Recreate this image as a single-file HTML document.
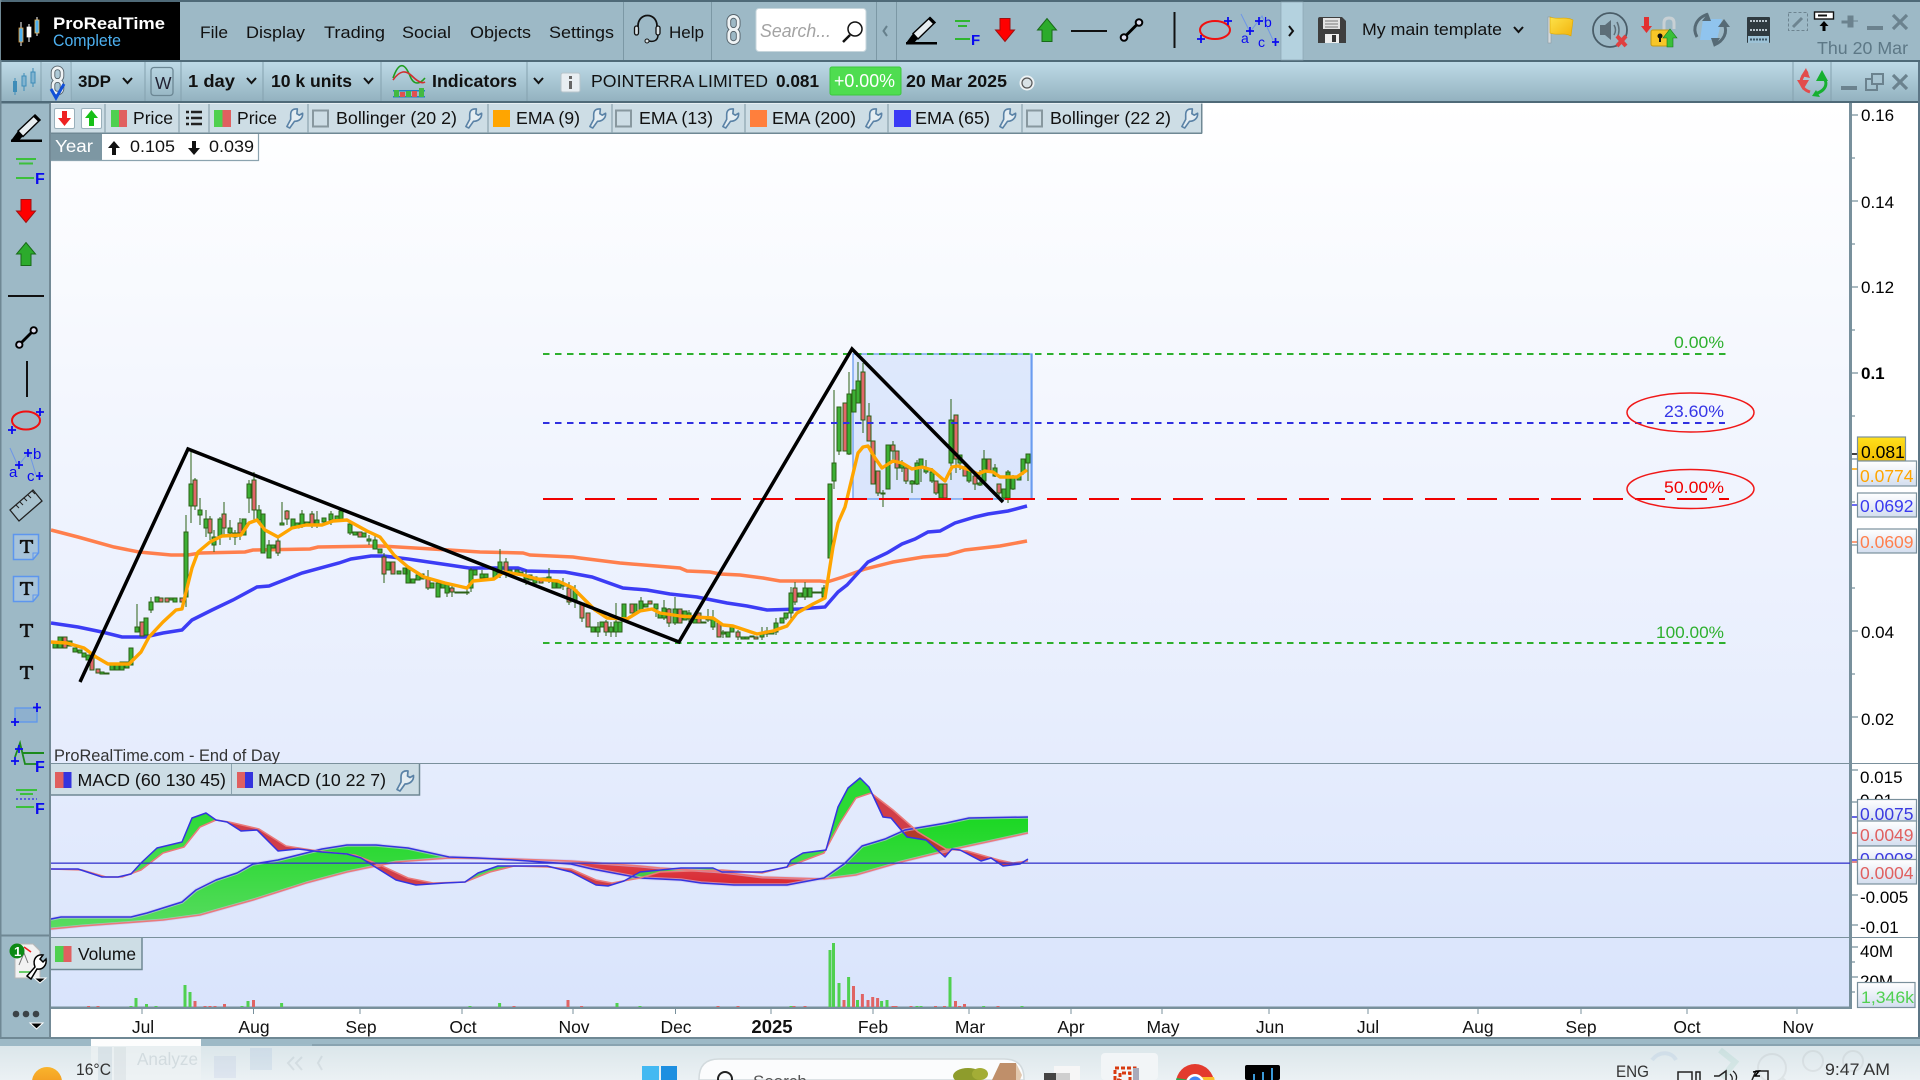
<!DOCTYPE html>
<html lang="en"><head><meta charset="utf-8"><title>ProRealTime Complete</title>
<style>
html,body{margin:0;padding:0;width:1920px;height:1080px;overflow:hidden;background:#9db9c6}
svg{display:block;font-family:"Liberation Sans",Arial,sans-serif;font-size:17px}
text{fill:#111}
.b{font-weight:bold}
.lab{font-size:17px;fill:#000}
</style></head><body>
<svg width="1920" height="1080" viewBox="0 0 1920 1080" xmlns="http://www.w3.org/2000/svg">
<defs>
<linearGradient id="bar2" x1="0" y1="0" x2="0" y2="1"><stop offset="0" stop-color="#bedae7"/><stop offset="1" stop-color="#93b2c0"/></linearGradient>
<linearGradient id="chart" gradientUnits="userSpaceOnUse" x1="0" y1="103" x2="0" y2="1007"><stop offset="0" stop-color="#ffffff"/><stop offset=".73" stop-color="#e5ecfd"/><stop offset="1" stop-color="#d9e4fc"/></linearGradient>
<linearGradient id="tag" x1="0" y1="0" x2="0" y2="1"><stop offset="0" stop-color="#ffffff"/><stop offset="1" stop-color="#d3deef"/></linearGradient>
<linearGradient id="tagy" x1="0" y1="0" x2="0" y2="1"><stop offset="0" stop-color="#ffe01c"/><stop offset="1" stop-color="#f2bd00"/></linearGradient>
<linearGradient id="task" x1="0" y1="0" x2="0" y2="1"><stop offset="0" stop-color="#dbe6ea"/><stop offset="1" stop-color="#ebf1f4"/></linearGradient>
<linearGradient id="sun" x1="0" y1="0" x2="0" y2="1"><stop offset="0" stop-color="#f9b42c"/><stop offset="1" stop-color="#ee8a1a"/></linearGradient>
<linearGradient id="flag" x1="0" y1="0" x2="1" y2="1"><stop offset="0" stop-color="#fde24a"/><stop offset="1" stop-color="#f2b30c"/></linearGradient>
<linearGradient id="grn" gradientUnits="userSpaceOnUse" x1="0" y1="810" x2="0" y2="930"><stop offset="0" stop-color="#17d81f"/><stop offset="1" stop-color="#5adb62"/></linearGradient>
<linearGradient id="red" gradientUnits="userSpaceOnUse" x1="0" y1="840" x2="0" y2="890"><stop offset="0" stop-color="#e05a5e"/><stop offset="1" stop-color="#d8232d"/></linearGradient>
<symbol id="pencil" viewBox="0 0 31 29" overflow="visible"><path d="M0 29V26.500H31V29Z" fill="#000"/><path d="M0 27.500L7 18L12 23L8 27.500Z" fill="#000"/><path d="M7 18L24 2L29 7L12 23.500Z" fill="#e8eef1" stroke="#000" stroke-width="1.400"/><path d="M22.500 4L24.500 1.500L30 7L27.500 9Z" fill="#000"/></symbol>
<symbol id="wr" viewBox="0 0 20 23" overflow="visible"><path d="M2 20.500L5 22L10 15C14.500 15 19 12 18.500 6.500L15 8.500L12.500 7L13 2C9 1.500 6 3 6 8V13Z" fill="#e4edf2" stroke="#5a82a6" stroke-width="1.700" stroke-linejoin="round"/></symbol>
<symbol id="down" viewBox="0 0 20 24" overflow="visible"><path d="M5 .5H15V12H19.500L10 23.500L.5 12H5Z" fill="#f00" stroke="#a01010"/></symbol>
<symbol id="up" viewBox="0 0 20 24" overflow="visible"><path d="M5 23.500H15V12H19.500L10 .5L.5 12H5Z" fill="#2cab2c" stroke="#186a18"/></symbol>
<symbol id="seg" viewBox="0 0 24 24" overflow="visible"><path d="M5 19L18 6" stroke="#000" stroke-width="3"/><circle cx="4.500" cy="19.500" r="3.300" fill="#dde" stroke="#000" stroke-width="2"/><circle cx="19.500" cy="4.500" r="3.300" fill="#dde" stroke="#000" stroke-width="2"/></symbol>
<symbol id="link" viewBox="0 0 16 30" overflow="visible"><rect x="3" y="1" width="10" height="14" rx="5" fill="none" stroke="#56636b" stroke-width="5"/><rect x="3" y="15" width="10" height="14" rx="5" fill="none" stroke="#56636b" stroke-width="5"/><rect x="3" y="1" width="10" height="14" rx="5" fill="none" stroke="#eef3f5" stroke-width="3"/><rect x="3" y="15" width="10" height="14" rx="5" fill="none" stroke="#eef3f5" stroke-width="3"/></symbol>
<symbol id="ttt" viewBox="0 0 18 18" overflow="visible"><path d="M1 1H17V6H15.500Q15 3 12 3H10.500V15L12.500 16V17H5.500V16L7.500 15V3H6Q3 3 2.500 6H1Z" fill="#111"/></symbol>
<clipPath id="aS1"><polygon points="51,600 51,869 82,870 106,877 122,877 141,870 163,853 184,847 200,827 216,820 229,822 259,829 286,846 318,851 355,855 380,865 408,878 433,883 465,882 490,872 514,866 547,867 571,869 596,880 612,883 640,878 660,872 722,870 762,873 787,867 824,853 840,823 856,798 871,793 893,810 918,832 946,849 967,851 999,860 1013,863 1028,861 1028,600"/></clipPath>
<clipPath id="aB1"><polygon points="51,600 51,869 78,869 102,877 118,877 131,874 141,863 157,848 182,842 192,818 206,813 216,820 227,822 241,831 257,830 278,851 298,849 322,852 347,854 361,858 380,870 396,880 416,885 445,883 465,882 478,873 498,866 547,866 571,872 596,885 608,886 624,881 640,872 681,868 713,868 722,872 762,872 787,867 791,860 803,853 826,850 838,807 848,788 860,778 869,787 883,817 891,818 907,837 926,840 945,857 952,849 960,850 981,861 991,858 1003,866 1020,864 1028,859 1028,600"/></clipPath>
<clipPath id="aS2"><polygon points="51,600 51,929 82,926 163,920 200,915 253,900 306,883 347,872 371,867 396,862 449,858 514,859 571,861 640,866 660,868 722,872 762,877 824,879 856,875 901,862 950,850 987,842 1028,833 1028,600"/></clipPath>
<clipPath id="aB2"><polygon points="51,600 51,919 61,917 131,917 147,913 182,902 196,890 216,880 237,873 253,864 278,860 306,853 322,849 347,845 376,845 408,848 449,857 478,858 514,860 571,864 592,869 640,878 681,880 701,883 734,885 787,885 824,878 844,864 862,846 885,839 905,830 946,823 969,818 1028,817 1028,600"/></clipPath>
</defs>

<!-- frame bars -->
<rect width="1920" height="1080" fill="#9db9c6"/>
<rect width="1920" height="2" fill="#4f6a78"/>
<rect x="0" y="60" width="1920" height="2.500" fill="#4f6a78"/>
<rect x="0" y="62" width="1920" height="39" fill="url(#bar2)"/>
<rect x="0" y="101" width="1920" height="2.500" fill="#4f6a78"/>
<rect x="0" y="0" width="1.500" height="1040" fill="#6f8894"/>

<!-- logo -->
<rect x="1" y="2" width="179" height="58" fill="#000"/>
<path d="M21 22V46M29 24V42M37 17V36" stroke="#fff" stroke-width="1"/>
<rect x="19" y="28" width="4" height="14" fill="#4db0f0" stroke="#e8a040" stroke-width=".8"/>
<rect x="27" y="27" width="4" height="10" fill="#fff" stroke="#fff" stroke-width=".7"/>
<rect x="35" y="20" width="4" height="13" fill="#4db0f0" stroke="#f0c060" stroke-width=".8"/>
<text x="53" y="29" class="b" style="fill:#fff" font-size="17" textLength="112" lengthAdjust="spacingAndGlyphs">ProRealTime</text>
<text x="53" y="46" style="fill:#4db0f0" font-size="16.500" textLength="68" lengthAdjust="spacingAndGlyphs">Complete</text>

<!-- menu -->
<g font-size="17">
<text x="200" y="38" textLength="28" lengthAdjust="spacingAndGlyphs">File</text>
<text x="246" y="38" textLength="59" lengthAdjust="spacingAndGlyphs">Display</text>
<text x="324" y="38" textLength="61" lengthAdjust="spacingAndGlyphs">Trading</text>
<text x="402" y="38" textLength="49" lengthAdjust="spacingAndGlyphs">Social</text>
<text x="470" y="38" textLength="61" lengthAdjust="spacingAndGlyphs">Objects</text>
<text x="549" y="38" textLength="65" lengthAdjust="spacingAndGlyphs">Settings</text>
<text x="669" y="38" textLength="35" lengthAdjust="spacingAndGlyphs">Help</text>
</g>
<path d="M623.500 2V60M711.500 2V60M876.500 2V60M896.500 2V60" stroke="#7c98a5" stroke-width="1"/>
<!-- headset -->
<path d="M638 32V26C638 12 657 12 657 26V32" fill="none" stroke="#111" stroke-width="1.800"/>
<rect x="634.500" y="26" width="4" height="9" rx="2" fill="#d8e2e6" stroke="#111" stroke-width="1.300"/>
<rect x="656" y="26" width="4" height="9" rx="2" fill="#d8e2e6" stroke="#111" stroke-width="1.300"/>
<path d="M658 35C658 41 653 42 649 41" fill="none" stroke="#111" stroke-width="1.500"/><circle cx="647" cy="41" r="2" fill="#d8e2e6" stroke="#111"/>
<use href="#link" x="726" y="15" width="15" height="29"/>
<!-- search -->
<rect x="756" y="8.500" width="110" height="43" rx="3" fill="#fff" stroke="#c7d6dc"/>
<text x="760" y="37" font-style="italic" style="fill:#a3a3a3" font-size="18" textLength="71" lengthAdjust="spacingAndGlyphs">Search...</text>
<circle cx="855" cy="29" r="7" fill="#fff" stroke="#111" stroke-width="1.500"/><path d="M850 35L843 42" stroke="#111" stroke-width="2.500"/>
<path d="M887 26L883.500 31L887 36" fill="none" stroke="#66808c" stroke-width="2"/>
<use href="#pencil" x="906" y="15" width="31" height="30"/>

<!-- F icon top -->
<path d="M955 21H970M958 26H967M955 39H970" stroke="#2fb52f" stroke-width="2"/>
<text x="971" y="45" class="b" style="fill:#0a0af0" font-size="15">F</text>
<use href="#down" x="995" y="18" width="20" height="24"/>
<use href="#up" x="1037" y="18" width="20" height="24"/>
<rect x="1071" y="30" width="36" height="2" fill="#111"/>
<use href="#seg" x="1119" y="18" width="25" height="24"/>
<rect x="1173.500" y="12" width="2" height="36" fill="#111"/>
<ellipse cx="1215" cy="30" rx="15" ry="9" fill="none" stroke="#f01010" stroke-width="2"/>
<path d="M1224 21H1232M1228 17V25M1197 39H1205M1201 35V43" stroke="#0a0af0" stroke-width="1.800"/>
<path d="M1241 14L1250 32L1262 16L1273 40" stroke="#6f96e6" stroke-width="1" fill="none"/>
<path d="M1255 21H1263M1259 17V25M1246 31H1254M1250 27V35M1272 42H1279M1275.500 38V46" stroke="#0a0af0" stroke-width="1.700"/>
<text x="1264" y="27" style="fill:#0a0af0" font-size="14">b</text>
<text x="1241" y="43" style="fill:#0a0af0" font-size="14">a</text>
<text x="1258" y="47" style="fill:#0a0af0" font-size="14">c</text>
<rect x="1281" y="2" width="22" height="58" fill="#b4d2df" stroke="#8aa6b3" stroke-width=".7"/>
<path d="M1289 26L1293 31L1289 36" fill="none" stroke="#111" stroke-width="2"/>
<!-- floppy -->
<path d="M1318 19Q1318 17 1320 17H1342L1346 21V43H1318Z" fill="#3e3e3e"/>
<rect x="1323" y="18" width="17" height="11" fill="#e4e4e4"/><path d="M1325 21H1338M1325 24H1338M1325 27H1338" stroke="#777"/>
<rect x="1325" y="34" width="14" height="9" fill="#eee"/><rect x="1332" y="35" width="4" height="7" fill="#333"/>
<text x="1362" y="35" font-size="17" textLength="140" lengthAdjust="spacingAndGlyphs">My main template</text>
<path d="M1514 27L1518.500 32L1523 27" fill="none" stroke="#111" stroke-width="2"/>
<!-- flag -->
<rect x="1548" y="17" width="3" height="26" fill="#d4dadd" stroke="#8d9aa2" stroke-width=".6"/>
<path d="M1550 17C1556 20 1566 16 1573 20L1571 36C1564 32 1556 36 1550 33Z" fill="url(#flag)" stroke="#dda500" stroke-width=".6"/>
<!-- speaker -->
<circle cx="1610" cy="30" r="17" fill="none" stroke="#4a5d68" stroke-width="1.800"/>
<path d="M1600 25H1605L1611 20V40L1605 35H1600Z" fill="#5d6e78"/><path d="M1614 25Q1617 30 1614 35M1617 22Q1621 30 1617 38" fill="none" stroke="#5d6e78" stroke-width="1.500"/>
<path d="M1617 36L1626 46M1626 36L1617 46" stroke="#e04040" stroke-width="4"/>
<!-- lock -->
<path d="M1664 31V23Q1664 18 1669 18Q1674 18 1674 23V29" fill="none" stroke="#c8d0d4" stroke-width="3"/>
<rect x="1651" y="30" width="19" height="16" rx="2" fill="#f7c628" stroke="#c69a10"/><circle cx="1660" cy="36" r="2.500" fill="#111"/><rect x="1659" y="37" width="2" height="5" fill="#111"/>
<path d="M1644 26V17H1649V26H1652L1646.500 33L1641 26Z" fill="#e23030"/>
<path d="M1667 47V38H1663L1670 29L1677 38H1673V47Z" fill="#39c039" stroke="#177a17" stroke-width=".6"/>
<!-- refresh -->
<path d="M1703 19H1722L1717 40H1700Z" fill="#90c4ee"/>
<path d="M1708 14C1696 18 1692 28 1697 37M1714 45C1724 41 1728 32 1724 24" fill="none" stroke="#566a75" stroke-width="3"/>
<path d="M1708 13L1702 21L1711 21ZM1714 47L1720 38L1711 38ZM1718 27L1730 27L1724 19Z" fill="#566a75"/>
<!-- server -->
<rect x="1747" y="17" width="23" height="26" rx="1" fill="#2f3a40"/><rect x="1748" y="36" width="21" height="7" fill="#9dc2d6"/>
<path d="M1750 21H1767M1750 30H1767" stroke="#b8c4cc" stroke-width="2" stroke-dasharray="2 1"/>
<path d="M1750 39.500H1767" stroke="#3a5566" stroke-width="2" stroke-dasharray="2 1"/>
<!-- right top -->
<rect x="1788.500" y="12.500" width="19" height="18" fill="none" stroke="#6d8490" stroke-dasharray="3 2"/>
<path d="M1793 27L1802 18" stroke="#6d8490" stroke-width="3"/>
<rect x="1814.500" y="12" width="19" height="7" fill="#fff" stroke="#111" stroke-width="1.400"/><rect x="1818" y="14.500" width="9" height="2" fill="#111"/>
<path d="M1824 21L1828.500 26H1825.500V31H1822.500V26H1819.500Z" fill="#000"/>
<path d="M1842 21H1848V16H1853V27H1848V23H1842ZM1853 21H1858" fill="#6b828e" stroke="#6b828e"/>
<rect x="1867" y="26" width="16" height="4" fill="#6b828e"/>
<path d="M1893 15L1907 29M1907 15L1893 29" stroke="#6b828e" stroke-width="3.200"/>
<text x="1817" y="54" style="fill:#5d7886" font-size="17.500" textLength="91" lengthAdjust="spacingAndGlyphs">Thu 20 Mar</text>

<!-- second row -->
<path d="M41 62V101M71 62V101M145 62V101M181 62V101M263 62V101M381 62V101M527 62V101M1793 62V101M1831 62V101" stroke="#84a1ae" stroke-width="1"/>
<path d="M15 78V95M24 73V91M33 68V87" stroke="#3d8cb8" stroke-width="1"/>
<rect x="13" y="81" width="4" height="11" fill="#3d8cb8"/><rect x="22" y="76" width="4" height="10" fill="#82b4d0" stroke="#3d8cb8"/><rect x="31" y="72" width="4" height="11" fill="#82b4d0" stroke="#3d8cb8"/>
<rect x="42" y="63" width="29" height="38" fill="#a9c6d3" opacity=".5"/>
<use href="#link" x="50" y="67" width="15" height="27"/>
<path d="M51 89L56 98L64 84" fill="none" stroke="#1050d8" stroke-width="3"/>
<text x="78" y="87" class="b" font-size="17" textLength="33" lengthAdjust="spacingAndGlyphs">3DP</text>
<path d="M123 78L127.500 83L132 78" fill="none" stroke="#111" stroke-width="2"/>
<rect x="151" y="67.500" width="22" height="28" rx="3" fill="none" stroke="#6c8794" stroke-width="1.300"/>
<text x="155" y="89" font-size="17.500" style="fill:#223">W</text>
<text x="188" y="87" class="b" font-size="17.500" textLength="47" lengthAdjust="spacingAndGlyphs">1 day</text>
<path d="M247 78L251.500 83L256 78" fill="none" stroke="#111" stroke-width="2"/>
<text x="271" y="87" class="b" font-size="17.500" textLength="81" lengthAdjust="spacingAndGlyphs">10 k units</text>
<path d="M364 78L368.500 83L373 78" fill="none" stroke="#111" stroke-width="2"/>
<!-- indicators icon -->
<rect x="393" y="90" width="32" height="1.500" fill="#2080c0"/><rect x="393" y="96" width="32" height="1.500" fill="#2080c0"/>
<path d="M393 78C400 58 406 66 410 76C414 86 420 84 425 78" fill="none" stroke="#1f9d1f" stroke-width="1.600"/>
<path d="M393 80C400 70 406 70 412 76C418 82 422 84 425 82" fill="none" stroke="#d03030" stroke-width="1.600"/>
<g fill="#42b942"><rect x="394" y="90" width="5" height="7"/><rect x="406" y="91" width="5" height="6"/><rect x="419" y="88" width="5" height="9"/></g><rect x="400" y="92" width="5" height="5" fill="#e05050"/><rect x="412" y="91" width="5" height="6" fill="#e05050"/>
<text x="432" y="87" class="b" font-size="17.500" textLength="85" lengthAdjust="spacingAndGlyphs">Indicators</text>
<path d="M534 78L538.500 83L543 78" fill="none" stroke="#111" stroke-width="2"/>
<rect x="561" y="73" width="19" height="19" rx="2" fill="#e8eef2" stroke="#b6c4cb"/>
<rect x="569" y="76" width="3" height="3" fill="#666"/><rect x="569" y="81" width="3" height="8" fill="#666"/>
<text x="591" y="87" font-size="17.500" textLength="177" lengthAdjust="spacingAndGlyphs">POINTERRA LIMITED</text>
<text x="776" y="87" class="b" font-size="17.500" textLength="43" lengthAdjust="spacingAndGlyphs">0.081</text>
<rect x="830" y="67" width="71" height="28" rx="2" fill="#4fdd50" stroke="#3cc83e"/>
<text x="834" y="87" font-size="18" style="fill:#fff" textLength="61" lengthAdjust="spacingAndGlyphs">+0.00%</text>
<text x="906" y="87" class="b" font-size="17.500" textLength="101" lengthAdjust="spacingAndGlyphs">20 Mar 2025</text>
<circle cx="1027" cy="83" r="7.500" fill="#eef3f5"/><circle cx="1027" cy="83" r="5" fill="#d9e2e6" stroke="#555" stroke-width="1.200"/>
<!-- refresh green/red -->
<path d="M1810 92C1798 88 1799 76 1808 72" fill="none" stroke="#e24c4c" stroke-width="3"/><path d="M1806 68L1810 78L1801 76Z M1797 80L1809 80L1803 90Z" fill="#e24c4c"/>
<path d="M1820 76C1829 80 1828 90 1815 94" fill="none" stroke="#16b030" stroke-width="3"/><path d="M1816 81L1828 81L1822 70Z M1816 90L1812 96L1820 97Z" fill="#16b030"/>
<rect x="1841" y="86" width="16" height="4" fill="#6b828e"/>
<rect x="1866" y="79" width="11" height="11" fill="none" stroke="#6b828e" stroke-width="2"/><rect x="1872" y="74" width="11" height="10" fill="#a8c4d1" stroke="#6b828e" stroke-width="2"/>
<path d="M1893 75L1907 89M1907 75L1893 89" stroke="#6b828e" stroke-width="3.200"/>

<!-- chart backgrounds -->
<rect x="51" y="103" width="1799" height="905" fill="url(#chart)"/>
<rect x="1852" y="103" width="66" height="934" fill="#fff"/>
<rect x="1918" y="62" width="2" height="978" fill="#5c7686"/>
<rect x="49" y="103" width="2" height="934" fill="#738a96"/>
<rect x="1849" y="103" width="3" height="906" fill="#78909c"/>
<rect x="51" y="1008" width="1867" height="29" fill="#fff"/>
<rect x="51" y="1006.500" width="1801" height="2.500" fill="#78909c"/>
<rect x="51" y="763" width="1867" height="1" fill="#7a909c"/>
<rect x="51" y="937" width="1867" height="1" fill="#7a909c"/>

<!-- fib rectangle -->
<rect x="853" y="354" width="179" height="145" fill="#6a9cf0" fill-opacity=".16" stroke="#6a9cf0" stroke-width="1.300"/>
<rect x="1030.500" y="354" width="2" height="145" fill="#6a9cf0"/>

<!-- EMAs under candles -->
<polyline fill="none" stroke="#ff7f4d" stroke-width="3.500" points="51,530 78,537 114,547 139,552 171,555 188,555 200,553 245,552 253,550 310,549 318,547 380,546 449,550 480,552 523,553 530,555 573,557 580,558 620,563 680,568 687,571 710,572 720,574 740,575 763,578 780,581 820,581 827,582 843,577 865,569 893,562 923,557 947,555 965,550 1000,546 1027,541"/>
<polyline fill="none" stroke="#3c3cf5" stroke-width="3.500" points="51,623 78,627 102,632 122,637 145,637 163,633 182,630 192,620 212,610 233,600 257,587 269,586 302,573 339,563 351,559 371,556 384,556 408,559 449,565 469,568 518,568 527,571 565,572 592,577 623,588 647,590 670,594 697,597 727,603 747,606 767,610 800,609 825,607 838,592 847,585 868,562 887,553 902,544 915,539 928,532 940,531 955,523 975,517 988,514 1008,511 1027,506"/>

<!-- candles -->
<path fill="none" stroke="#2b6116" stroke-width="1" d="M137 604V632M151 597V613M186 515V607M191 449V523M195 478V510M200 498V525M206 510V537M210 516V540M214 530V552M220 517V545M224 502V535M230 520V540M235 530V545M240 518V540M249 480V513M254 472V520M259 505V523M269 540V558M278 535V556M282 502V525M287 510V525M302 510V528M312 511V528M317 511V528M331 511V525M341 508V521M350 522V535M369 535V545M375 535V549M384 553V583M428 570V590M438 583V597M447 583V597M452 585V597M467 588V595M471 568V592M482 570V580M500 549V578M506 558V578M526 570V585M549 568V583M563 578V590M569 582V605M575 585V608M582 603V622M598 622V637M606 620V636M611 622V637M616 603V637M641 597V612M656 604V617M664 600V620M669 608V627M675 597V625M689 610V622M708 609V622M713 610V630M723 630V638M738 630V640M762 627V640M767 627V637M776 618V635M786 613V620M791 587V620M795 582V605M805 582V600M824 585V600M834 390V489M839 407V455M849 372V455M858 362V403M863 363V433M869 403V441M878 471V496M883 490V507M893 441V460M897 451V480M902 460V472M906 466V484M912 480V493M917 460V485M921 459V482M926 460V474M932 468V483M936 481V495M951 399V480M956 415V473M960 455V470M965 462V476M969 468V483M975 474V490M980 470V486M984 450V482M995 464V477M999 484V496M1004 489V500M1008 470V503M1013 475V490M1023 459V475M1028 454V481"/>
<path fill="#3cb034" stroke="#2b6116" stroke-width="1" d="M53 643h4v5h-4zM58 637h4v11h-4zM68 641h4v5h-4zM73 648h4v4h-4zM78 650h4v3h-4zM82 653h4v4h-4zM86 655h4v5h-4zM100 672h4v2h-4zM105 673h4v1h-4zM110 663h4v7h-4zM115 663h4v7h-4zM120 662h4v8h-4zM125 662h4v6h-4zM129 648h4v17h-4zM135 627h4v5h-4zM144 618h4v17h-4zM149 602h4v8h-4zM155 597h4v5h-4zM169 598h4v2h-4zM173 598h4v4h-4zM184 532h4v65h-4zM189 484h4v22h-4zM198 510h4v5h-4zM204 519h4v9h-4zM212 537h4v8h-4zM218 519h4v18h-4zM228 528h4v5h-4zM233 533h4v4h-4zM242 519h4v16h-4zM247 484h4v14h-4zM257 510h4v10h-4zM261 514h4v39h-4zM267 545h4v13h-4zM271 545h4v3h-4zM280 523h4v2h-4zM291 519h4v9h-4zM295 523h4v5h-4zM300 514h4v11h-4zM305 522h4v4h-4zM315 520h4v6h-4zM322 518h4v4h-4zM329 514h4v6h-4zM335 516h4v4h-4zM339 511h4v8h-4zM348 524h4v9h-4zM353 532h4v3h-4zM362 533h4v4h-4zM367 539h4v2h-4zM373 540h4v9h-4zM378 549h4v4h-4zM386 562h4v8h-4zM397 571h4v3h-4zM403 568h4v6h-4zM406 568h4v15h-4zM411 579h4v4h-4zM416 575h4v5h-4zM420 574h4v5h-4zM430 583h4v5h-4zM436 583h4v14h-4zM441 583h4v5h-4zM445 583h4v10h-4zM455 592h4v1h-4zM460 592h4v1h-4zM465 592h4v1h-4zM469 570h4v18h-4zM473 570h4v5h-4zM480 574h4v4h-4zM484 574h4v4h-4zM493 570h4v8h-4zM498 562h4v11h-4zM508 570h4v4h-4zM515 570h4v4h-4zM519 572h4v3h-4zM524 576h4v3h-4zM528 575h4v5h-4zM533 577h4v6h-4zM543 578h4v2h-4zM547 577h4v3h-4zM552 582h4v6h-4zM557 582h4v6h-4zM561 583h4v3h-4zM573 590h4v10h-4zM591 627h4v5h-4zM596 627h4v5h-4zM600 622h4v5h-4zM609 627h4v5h-4zM614 622h4v10h-4zM618 622h4v10h-4zM622 604h4v14h-4zM633 604h4v9h-4zM639 601h4v9h-4zM644 604h4v3h-4zM654 604h4v5h-4zM658 613h4v5h-4zM662 608h4v10h-4zM673 609h4v14h-4zM683 611h4v9h-4zM687 613h4v6h-4zM693 619h4v4h-4zM702 622h4v1h-4zM706 617h4v3h-4zM711 618h4v9h-4zM721 632h4v2h-4zM726 632h4v5h-4zM730 627h4v5h-4zM741 637h4v2h-4zM745 637h4v2h-4zM750 636h4v1h-4zM760 633h4v4h-4zM765 631h4v3h-4zM770 632h4v2h-4zM774 623h4v9h-4zM780 618h4v5h-4zM784 613h4v5h-4zM789 593h4v20h-4zM798 593h4v4h-4zM803 588h4v9h-4zM808 588h4v9h-4zM813 592h4v1h-4zM818 592h4v1h-4zM822 588h4v9h-4zM828 484h4v74h-4zM832 463h4v18h-4zM837 407h4v44h-4zM847 394h4v60h-4zM852 390h4v22h-4zM856 381h4v22h-4zM881 493h4v1h-4zM886 445h4v44h-4zM900 463h4v5h-4zM910 481h4v3h-4zM915 463h4v21h-4zM919 459h4v8h-4zM924 468h4v4h-4zM930 472h4v9h-4zM939 484h4v14h-4zM949 420h4v43h-4zM958 455h4v8h-4zM967 470h4v11h-4zM978 483h4v2h-4zM982 459h4v22h-4zM993 468h4v8h-4zM1002 489h4v9h-4zM1006 472h4v26h-4zM1011 477h4v12h-4zM1017 476h4v4h-4zM1021 459h4v13h-4zM1026 454h4v9h-4z"/>
<path fill="#e2666a" stroke="#2b6116" stroke-width="1" d="M63 637h4v11h-4zM90 657h4v13h-4zM96 669h4v4h-4zM140 622h4v14h-4zM159 598h4v4h-4zM165 598h4v4h-4zM180 598h4v4h-4zM193 480h4v26h-4zM208 519h4v14h-4zM222 514h4v14h-4zM238 523h4v10h-4zM252 480h4v30h-4zM276 541h4v12h-4zM285 511h4v8h-4zM310 514h4v11h-4zM358 532h4v5h-4zM382 557h4v17h-4zM391 562h4v12h-4zM426 579h4v9h-4zM450 588h4v4h-4zM504 562h4v12h-4zM539 578h4v5h-4zM567 588h4v14h-4zM580 603h4v15h-4zM586 613h4v14h-4zM604 622h4v10h-4zM630 604h4v9h-4zM648 601h4v3h-4zM667 609h4v14h-4zM678 609h4v14h-4zM697 613h4v10h-4zM717 623h4v14h-4zM736 632h4v5h-4zM754 637h4v2h-4zM793 588h4v14h-4zM843 403h4v48h-4zM861 372h4v48h-4zM867 416h4v25h-4zM871 441h4v43h-4zM876 471h4v22h-4zM891 445h4v6h-4zM895 451h4v17h-4zM904 468h4v13h-4zM934 481h4v12h-4zM943 484h4v14h-4zM954 415h4v44h-4zM963 468h4v8h-4zM973 476h4v8h-4zM987 459h4v13h-4zM997 484h4v9h-4z"/>
<!-- EMA 9 -->
<polyline fill="none" stroke="#ffa500" stroke-width="3.400" stroke-linejoin="round" points="51,642 67,643 84,648 96,657 108,664 129,664 141,652 149,637 163,622 176,610 182,609 187,588 192,568 198,552 210,542 222,536 241,535 249,523 257,520 265,530 278,537 292,528 306,525 322,525 333,521 347,520 367,531 380,537 394,555 408,567 424,577 445,583 467,588 473,581 494,579 504,572 523,575 537,579 558,581 573,588 583,598 595,610 607,618 627,619 640,611 652,609 660,613 680,616 693,617 713,618 723,625 733,626 757,634 773,631 787,626 797,613 813,604 825,598 833,547 838,523 845,507 858,453 863,447 868,446 875,458 882,468 893,461 902,463 912,469 922,467 932,470 945,481 952,467 958,466 970,470 978,474 985,471 993,472 1000,477 1017,477 1027,470"/>

<!-- fib lines -->
<path d="M543 354H1726" stroke="#2eb02e" stroke-width="2" stroke-dasharray="6.500 5.500"/>
<path d="M543 423H1725" stroke="#3030e0" stroke-width="2" stroke-dasharray="6.500 5.500"/>
<path d="M543 499H1729" stroke="#f00000" stroke-width="2" stroke-dasharray="30 12"/>
<path d="M543 643H1726" stroke="#2eb02e" stroke-width="2" stroke-dasharray="6.500 5.500"/>
<text x="1674" y="348" style="fill:#2eb02e" font-size="17" textLength="50" lengthAdjust="spacingAndGlyphs">0.00%</text>
<text x="1664" y="417" style="fill:#3535e6" font-size="17" textLength="60" lengthAdjust="spacingAndGlyphs">23.60%</text>
<text x="1664" y="493" style="fill:#f00000" font-size="17" textLength="60" lengthAdjust="spacingAndGlyphs">50.00%</text>
<text x="1656" y="638" style="fill:#2eb02e" font-size="17" textLength="68" lengthAdjust="spacingAndGlyphs">100.00%</text>
<ellipse cx="1690.500" cy="412.500" rx="63.500" ry="19.500" fill="none" stroke="#f01818" stroke-width="1.500"/>
<ellipse cx="1690.500" cy="489" rx="63.500" ry="19.500" fill="none" stroke="#f01818" stroke-width="1.500"/>

<!-- black trend lines -->
<path d="M80 682L188 449L679 642L852 349L1003 502" fill="none" stroke="#000" stroke-width="3.500" stroke-linejoin="miter"/>

<text x="54" y="761" font-size="16.500" style="fill:#333" textLength="226" lengthAdjust="spacingAndGlyphs">ProRealTime.com - End of Day</text>

<!-- MACD -->
<polygon fill="url(#grn)" clip-path="url(#aS2)" points="51,919 61,917 131,917 147,913 182,902 196,890 216,880 237,873 253,864 278,860 306,853 322,849 347,845 376,845 408,848 449,857 478,858 514,860 571,864 592,869 640,878 681,880 701,883 734,885 787,885 824,878 844,864 862,846 885,839 905,830 946,823 969,818 1028,817 1028,940 51,940"/>
<polygon fill="url(#red)" clip-path="url(#aB2)" points="51,929 82,926 163,920 200,915 253,900 306,883 347,872 371,867 396,862 449,858 514,859 571,861 640,866 660,868 722,872 762,877 824,879 856,875 901,862 950,850 987,842 1028,833 1028,940 51,940"/>
<polygon fill="url(#grn)" fill-opacity=".9" clip-path="url(#aS1)" points="51,869 78,869 102,877 118,877 131,874 141,863 157,848 182,842 192,818 206,813 216,820 227,822 241,831 257,830 278,851 298,849 322,852 347,854 361,858 380,870 396,880 416,885 445,883 465,882 478,873 498,866 547,866 571,872 596,885 608,886 624,881 640,872 681,868 713,868 722,872 762,872 787,867 791,860 803,853 826,850 838,807 848,788 860,778 869,787 883,817 891,818 907,837 926,840 945,857 952,849 960,850 981,861 991,858 1003,866 1020,864 1028,859 1028,940 51,940"/>
<polygon fill="#cc2028" fill-opacity=".85" clip-path="url(#aB1)" points="51,869 82,870 106,877 122,877 141,870 163,853 184,847 200,827 216,820 229,822 259,829 286,846 318,851 355,855 380,865 408,878 433,883 465,882 490,872 514,866 547,867 571,869 596,880 612,883 640,878 660,872 722,870 762,873 787,867 824,853 840,823 856,798 871,793 893,810 918,832 946,849 967,851 999,860 1013,863 1028,861 1028,940 51,940"/>
<g fill="none" stroke-linejoin="round">
<polyline stroke="#c9c0ee" stroke-width="3" stroke-opacity=".6" points="51,929 82,926 163,920 200,915 253,900 306,883 347,872 371,867 396,862 449,858 514,859 571,861 640,866 660,868 722,872 762,877 824,879 856,875 901,862 950,850 987,842 1028,833"/>
<polyline stroke="#c9c0ee" stroke-width="3.500" stroke-opacity=".6" points="51,919 61,917 131,917 147,913 182,902 196,890 216,880 237,873 253,864 278,860 306,853 322,849 347,845 376,845 408,848 449,857 478,858 514,860 571,864 592,869 640,878 681,880 701,883 734,885 787,885 824,878 844,864 862,846 885,839 905,830 946,823 969,818 1028,817"/>
<polyline stroke="#ea7a7a" stroke-width="1.600" points="51,929 82,926 163,920 200,915 253,900 306,883 347,872 371,867 396,862 449,858 514,859 571,861 640,866 660,868 722,872 762,877 824,879 856,875 901,862 950,850 987,842 1028,833"/>
<polyline stroke="#3434e0" stroke-width="1.500" points="51,919 61,917 131,917 147,913 182,902 196,890 216,880 237,873 253,864 278,860 306,853 322,849 347,845 376,845 408,848 449,857 478,858 514,860 571,864 592,869 640,878 681,880 701,883 734,885 787,885 824,878 844,864 862,846 885,839 905,830 946,823 969,818 1028,817"/>
<polyline stroke="#ea7a7a" stroke-width="1.600" points="51,869 82,870 106,877 122,877 141,870 163,853 184,847 200,827 216,820 229,822 259,829 286,846 318,851 355,855 380,865 408,878 433,883 465,882 490,872 514,866 547,867 571,869 596,880 612,883 640,878 660,872 722,870 762,873 787,867 824,853 840,823 856,798 871,793 893,810 918,832 946,849 967,851 999,860 1013,863 1028,861"/>
<polyline stroke="#3434e0" stroke-width="1.500" points="51,869 78,869 102,877 118,877 131,874 141,863 157,848 182,842 192,818 206,813 216,820 227,822 241,831 257,830 278,851 298,849 322,852 347,854 361,858 380,870 396,880 416,885 445,883 465,882 478,873 498,866 547,866 571,872 596,885 608,886 624,881 640,872 681,868 713,868 722,872 762,872 787,867 791,860 803,853 826,850 838,807 848,788 860,778 869,787 883,817 891,818 907,837 926,840 945,857 952,849 960,850 981,861 991,858 1003,866 1020,864 1028,859"/>
</g>
<rect x="51" y="862.500" width="1799" height="1.300" fill="#3434cc"/>

<!-- Volume -->
<path stroke="#50d050" stroke-width="3" d="M131 1006V1007M136 998V1007M146.500 1004V1007M156 1006V1007M185 985V1007M190 992V1007M242 1006V1007M248 1001V1007M281.600 1003V1007M470 1006V1007M499.600 1003V1007M617 1003V1007M640 1006V1007M791 1006V1007M830 950V1007M833.500 943V1007M839 983V1007M848.600 977V1007M857.500 1000V1007M881.600 1001V1007M887 1000V1007M917 1006V1007M921 1006V1007M950 977V1007M983.700 1006V1007M1022 1006V1007"/>
<path stroke="#e06464" stroke-width="3" d="M88.600 1006V1007M98 1006V1007M195 1001V1007M205 1006V1007M210 1006V1007M215 1006V1007M224.500 1004V1007M253.500 1000V1007M514 1006V1007M568 1000V1007M581.600 1006V1007M718 1006V1007M738 1006V1007M794 1006V1007M805 1006V1007M844 1000V1007M853.500 986V1007M862.400 994V1007M868 1000V1007M872.700 997V1007M877.600 998V1007M893 1006V1007M896 1006V1007M911 1006V1007M935.500 1006V1007M944.500 1006V1007M955.500 1001V1007M959.600 1006V1007M964.500 1004V1007M998 1006V1007"/>

<!-- legend row -->
<rect x="51" y="103.500" width="1151" height="30" fill="#cddde5"/>
<rect x="51" y="132.500" width="1151" height="1.500" fill="#6f8894"/>
<rect x="1201" y="103.500" width="1.500" height="30" fill="#6f8894"/>
<path d="M105 104V133M179 104V133M209 104V133M308 104V133M488 104V133M612 104V133M745 104V133M888 104V133M1022 104V133" stroke="#8ba3af" stroke-width="1.200"/>
<rect x="54.500" y="108.500" width="20" height="20" rx="1.500" fill="#fff" stroke="#9ab0bb"/><path d="M62 111H67V118H71L64.500 126L58 118H62Z" fill="#ee2222"/>
<rect x="81.500" y="108.500" width="20" height="20" rx="1.500" fill="#fff" stroke="#9ab0bb"/><path d="M89 126H94V118H98L91.500 110L85 118H89Z" fill="#17c017"/>
<rect x="111" y="110" width="8" height="17" fill="#4fd04f"/><rect x="119" y="110" width="8" height="17" fill="#e06060"/>
<text x="133" y="124" font-size="17.500" textLength="40" lengthAdjust="spacingAndGlyphs">Price</text>
<path d="M191 112H202M191 118H202M191 124H202" stroke="#222" stroke-width="2.400"/><path d="M186 112H189M186 118H189M186 124H189" stroke="#222" stroke-width="2.400"/>
<rect x="214" y="110" width="8.500" height="17" fill="#4fd04f"/><rect x="222.500" y="110" width="8.500" height="17" fill="#e06060"/>
<text x="237" y="124" font-size="17.500" textLength="40" lengthAdjust="spacingAndGlyphs">Price</text>
<use href="#wr" x="285" y="107" width="19" height="22"/>
<rect x="313" y="110.500" width="15" height="16" fill="none" stroke="#88989f" stroke-width="2"/>
<text x="336" y="124" font-size="17.500" textLength="121" lengthAdjust="spacingAndGlyphs">Bollinger (20 2)</text>
<use href="#wr" x="464" y="107" width="19" height="22"/>
<rect x="493" y="110" width="17" height="17" fill="#ffa500"/>
<text x="516" y="124" font-size="17.500" textLength="64" lengthAdjust="spacingAndGlyphs">EMA (9)</text>
<use href="#wr" x="588" y="107" width="19" height="22"/>
<rect x="616" y="110.500" width="15" height="16" fill="none" stroke="#88989f" stroke-width="2"/>
<text x="639" y="124" font-size="17.500" textLength="74" lengthAdjust="spacingAndGlyphs">EMA (13)</text>
<use href="#wr" x="721" y="107" width="19" height="22"/>
<rect x="750" y="110" width="17" height="17" fill="#ff7f3c"/>
<text x="772" y="124" font-size="17.500" textLength="84" lengthAdjust="spacingAndGlyphs">EMA (200)</text>
<use href="#wr" x="864" y="107" width="19" height="22"/>
<rect x="894" y="110" width="17" height="17" fill="#3a3af5"/>
<text x="915" y="124" font-size="17.500" textLength="75" lengthAdjust="spacingAndGlyphs">EMA (65)</text>
<use href="#wr" x="998" y="107" width="19" height="22"/>
<rect x="1027" y="110.500" width="15" height="16" fill="none" stroke="#88989f" stroke-width="2"/>
<text x="1050" y="124" font-size="17.500" textLength="121" lengthAdjust="spacingAndGlyphs">Bollinger (22 2)</text>
<use href="#wr" x="1180" y="107" width="19" height="22"/>

<!-- Year row -->
<rect x="51" y="134" width="51" height="26" fill="#7d97a3"/>
<rect x="102" y="134" width="156" height="26" fill="#fff"/>
<path d="M51 160.500H258.500V134" fill="none" stroke="#8ba3af" stroke-width="1.200"/>
<text x="55" y="152" style="fill:#fff" font-size="17.500" textLength="38" lengthAdjust="spacingAndGlyphs">Year</text>
<path d="M114 141L120 148H116V155H112V148H108Z" fill="#111"/>
<text x="130" y="152" font-size="17" textLength="45" lengthAdjust="spacingAndGlyphs">0.105</text>
<path d="M194 155L200 148H196V141H192V148H188Z" fill="#111"/>
<text x="209" y="152" font-size="17" textLength="45" lengthAdjust="spacingAndGlyphs">0.039</text>

<!-- MACD legend -->
<rect x="51" y="764" width="368" height="30.500" fill="#cddde5"/>
<path d="M51 795H419.500V764" fill="none" stroke="#6f8894" stroke-width="1.500"/>
<rect x="231" y="764" width="1" height="30" fill="#8ba3af"/>
<rect x="55" y="772" width="8.500" height="16" fill="#e06060"/><rect x="63.500" y="772" width="8" height="16" fill="#3434dd"/>
<text x="77.500" y="786" font-size="17.500" textLength="148.500" lengthAdjust="spacingAndGlyphs">MACD (60 130 45)</text>
<rect x="237" y="772" width="8" height="16" fill="#e06060"/><rect x="245" y="772" width="8" height="16" fill="#3434dd"/>
<text x="258" y="786" font-size="17.500" textLength="128" lengthAdjust="spacingAndGlyphs">MACD (10 22 7)</text>
<use href="#wr" x="395" y="769" width="20" height="23"/>

<!-- Volume legend -->
<rect x="51" y="938" width="91" height="31" fill="#cddde5"/>
<path d="M51 969.500H142V938" fill="none" stroke="#6f8894" stroke-width="1.500"/>
<rect x="55" y="946" width="8.500" height="16" fill="#4fd04f"/><rect x="63.500" y="946" width="8" height="16" fill="#e06060"/>
<text x="78" y="960" font-size="17.500" textLength="58" lengthAdjust="spacingAndGlyphs">Volume</text>

<!-- axis ticks -->
<path stroke="#78909c" stroke-width="1.200" d="M1852 115H1858M1852 158H1855M1852 201H1858M1852 244H1855M1852 287H1858M1852 330H1855M1852 373H1858M1852 416H1855M1852 459H1858M1852 502H1855M1852 545H1858M1852 588H1855M1852 631H1858M1852 674H1855M1852 717H1858M1852 770H1858M1852 802H1858M1852 833H1855M1852 895H1858M1852 925H1858M1852 947H1858M1852 962H1855M1852 977H1858M1852 992H1855"/>
<path stroke-width="1.500" d="M1852 454H1858" stroke="#000"/><path stroke-width="1.500" d="M1852 469H1858" stroke="#ffa500"/><path stroke-width="1.500" d="M1852 505H1858" stroke="#3a3af0"/><path stroke-width="1.500" d="M1852 542H1858" stroke="#ff7f4d"/><path stroke-width="1.500" d="M1852 817H1858" stroke="#3434dd"/><path stroke-width="1.500" d="M1852 833H1858" stroke="#e06060"/><path stroke-width="1.500" d="M1852 860H1858" stroke="#3434dd"/><path stroke-width="1.500" d="M1852 862H1858" stroke="#e06060"/>

<!-- axis labels -->
<g class="lab">
<text x="1861" y="121" class="lab">0.16</text>
<text x="1861" y="208" class="lab">0.14</text>
<text x="1861" y="293" class="lab">0.12</text>
<text x="1861" y="379" class="b lab" font-weight="bold">0.1</text>
<text x="1861" y="638" class="lab">0.04</text>
<text x="1861" y="725" class="lab">0.02</text>
<text x="1860" y="783" class="lab">0.015</text>
<text x="1860" y="806" class="lab">0.01</text>
<text x="1860" y="903" class="lab">-0.005</text>
<text x="1860" y="933" class="lab">-0.01</text>
<text x="1860" y="957" class="lab">40M</text>
<text x="1860" y="987" class="lab">20M</text>
</g>

<!-- tags -->
<rect x="1857.500" y="437" width="48" height="24" fill="url(#tagy)" stroke="#7a909c" stroke-width="1.200"/>
<text x="1861" y="458" font-size="17.500" style="fill:#000">0.081</text>
<rect x="1857.500" y="461" width="59" height="25" fill="url(#tag)" stroke="#7a909c" stroke-width="1.200"/>
<text x="1860" y="482" font-size="17.500" style="fill:#ffa500">0.0774</text>
<rect x="1857.500" y="493" width="59" height="24" fill="url(#tag)" stroke="#7a909c" stroke-width="1.200"/>
<text x="1860" y="512" font-size="17.500" style="fill:#3a3af0">0.0692</text>
<rect x="1857.500" y="529" width="59" height="24" fill="url(#tag)" stroke="#7a909c" stroke-width="1.200"/>
<text x="1860" y="548" font-size="17.500" style="fill:#ff7f4d">0.0609</text>

<rect x="1857.500" y="799.500" width="59" height="22" fill="url(#tag)" stroke="#7a909c" stroke-width="1.200"/>
<text x="1860" y="820" font-size="17.500" style="fill:#3a3ae0">0.0075</text>
<rect x="1857.500" y="821" width="59" height="25" fill="url(#tag)" stroke="#7a909c" stroke-width="1.200"/>
<text x="1860" y="841" font-size="17.500" style="fill:#e06060">0.0049</text>
<rect x="1857.500" y="846" width="59" height="24" fill="url(#tag)" stroke="#7a909c" stroke-width="1.200"/>
<text x="1860" y="865" font-size="17.500" style="fill:#3a3ae0">0.0008</text>
<rect x="1857.500" y="859.500" width="59" height="24.500" fill="url(#tag)" stroke="#7a909c" stroke-width="1.200"/>
<text x="1860" y="879" font-size="17.500" style="fill:#e06060">0.0004</text>
<rect x="1857.500" y="982.500" width="57.500" height="25" fill="url(#tag)" stroke="#7a909c" stroke-width="1.200"/>
<text x="1861" y="1003" font-size="17" style="fill:#50d050" textLength="53" lengthAdjust="spacingAndGlyphs">1,346k</text>

<!-- time axis -->
<path stroke="#78909c" stroke-width="1" d="M142 1009V1014M253.500 1009V1014M360 1009V1014M462 1009V1014M573 1009V1014M675.500 1009V1014M771 1009V1014M873 1009V1014M969 1009V1014M1071 1009V1014M1162 1009V1014M1269 1009V1014M1368 1009V1014M1478 1009V1014M1581 1009V1014M1687 1009V1014M1797 1009V1014"/>
<g font-size="17.500" text-anchor="middle">
<text x="143" y="1033">Jul</text><text x="254" y="1033">Aug</text><text x="361" y="1033">Sep</text><text x="463" y="1033">Oct</text><text x="574" y="1033">Nov</text><text x="676" y="1033">Dec</text>
<text x="772" y="1033" class="b" font-size="18.500">2025</text>
<text x="873" y="1033">Feb</text><text x="970" y="1033">Mar</text><text x="1071" y="1033">Apr</text><text x="1163" y="1033">May</text><text x="1270" y="1033">Jun</text><text x="1368" y="1033">Jul</text><text x="1478" y="1033">Aug</text><text x="1581" y="1033">Sep</text><text x="1687" y="1033">Oct</text><text x="1798" y="1033">Nov</text>
</g>

<!-- sidebar icons -->
<use href="#pencil" x="11" y="113" width="31" height="29"/>
<path d="M16 159H36M19 163.500H33M16 178H34" stroke="#3cc03c" stroke-width="2"/>
<text x="35" y="184" class="b" style="fill:#0a0af0" font-size="16">F</text>
<use href="#down" x="16" y="199" width="20" height="24"/>
<use href="#up" x="16" y="242" width="20" height="24"/>
<rect x="8" y="295" width="36" height="2" fill="#111"/>
<use href="#seg" x="15" y="326" width="23" height="23"/>
<rect x="26" y="361" width="2" height="36" fill="#111"/>
<ellipse cx="26" cy="420.500" rx="14" ry="9" fill="none" stroke="#f01010" stroke-width="2"/>
<path d="M36 412H44M40 408V416M8 430H16M12 426V434" stroke="#0a0af0" stroke-width="1.800"/>
<path d="M10 448L18 466L29 452L36 475" stroke="#6f96e6" stroke-width="1" fill="none"/>
<path d="M24 453H32M28 449V457M15 465H23M19 461V469M36 476H43M39.500 472V480" stroke="#0a0af0" stroke-width="1.700"/>
<text x="33" y="459" style="fill:#0a0af0" font-size="15">b</text>
<text x="9" y="477" style="fill:#0a0af0" font-size="15">a</text>
<text x="27" y="481" style="fill:#0a0af0" font-size="15">c</text>
<!-- ruler -->
<path d="M10 510L33 490L42 501L19 521Z" fill="#a9c3cf" stroke="#222" stroke-width="1.300"/>
<path d="M16 505L19 508M20 502L23 505M24 498L27 501M28 495L31 498M32 491L35 494" stroke="#222"/>
<!-- T icons -->
<path d="M13.500 534.500H38.500V553L33 559.500H13.500Z" fill="#a6c3da" stroke="#5d96ee" stroke-width="1.500"/><path d="M38.500 553H33V559.500" fill="none" stroke="#5d96ee"/>
<use href="#ttt" x="19" y="539" width="15" height="15"/>
<path d="M13.500 576.500H38.500V595L33 601.500H13.500Z" fill="#a6c3da" stroke="#5d96ee" stroke-width="1.500"/><path d="M38.500 595H33V601.500" fill="none" stroke="#5d96ee"/>
<use href="#ttt" x="19" y="581" width="15" height="15"/>
<use href="#ttt" x="19" y="623" width="15" height="15"/>
<use href="#ttt" x="19" y="665" width="15" height="15"/>
<rect x="15" y="708" width="22" height="14" fill="#88acd2" fill-opacity=".7" stroke="#5d96ee" stroke-width="1.300"/>
<path d="M33 707.500H41M37 703V712M11 722H19M15 718V726" stroke="#0a0af0" stroke-width="1.800"/>
<g transform="translate(0,17)">
<path d="M23 736H44" stroke="#1c8a1c" stroke-width="2"/><path d="M15 740L20 726L25 747H37" fill="none" stroke="#1c8a1c" stroke-width="1.800"/>
<path d="M11 744H19M15 740V748M15 732H23M19 728V736" stroke="#0a0af0" stroke-width="1.700"/>
<text x="35" y="755" class="b" style="fill:#0a0af0" font-size="16">F</text>
</g>
<g transform="translate(0,21)">
<path d="M16 769H37M20 773H33M16 786H34" stroke="#3cc03c" stroke-width="2"/><path d="M16 778H37" stroke="#4040e0" stroke-width="1.500" stroke-dasharray="2 2"/>
<text x="35" y="793" class="b" style="fill:#0a0af0" font-size="16">F</text>
</g>
<rect x="0" y="934.500" width="49" height="2" fill="#6f8894"/>
<!-- doc -->
<g transform="translate(0,31)">
<path d="M15 913H33L40 920V947H15Z" fill="#f2f2f2" stroke="#b8b8b8"/>
<path d="M24 916L31 921" stroke="#f02020" stroke-width="1.600"/><path d="M19 934L24 922L28 932" stroke="#777" fill="none"/><path d="M19 941H30" stroke="#3cc03c" stroke-width="1.500"/>
<path d="M27 945L35 936C32 928 37 923 43 924L40 928L43 931L46 928C47 934 43 939 37 938L31 948Z" fill="#fff" stroke="#000" stroke-width="1.500"/>
<circle cx="17" cy="920" r="7.500" fill="#0c8a14"/><text x="14" y="925" font-size="13" class="b" style="fill:#fff">1</text>
<path d="M34 947H46L40 952Z" fill="#000" stroke="#fff"/>
</g>
<circle cx="16" cy="1014" r="3.300" fill="#3c4347"/><circle cx="26" cy="1014" r="3.300" fill="#3c4347"/><circle cx="36" cy="1014" r="3.300" fill="#3c4347"/>
<path d="M30 1023H43L36.500 1029Z" fill="#000" stroke="#fff"/>

<!-- bottom band -->
<rect x="0" y="1037" width="1920" height="2" fill="#6f8894"/>
<rect x="0" y="1039" width="1920" height="8" fill="#9db9c6"/>
<rect x="91" y="1039" width="110" height="8" fill="#fdfdfd"/>
<rect x="312" y="1044" width="1608" height="2" fill="#89a3b0"/>

<!-- taskbar -->
<rect x="0" y="1046" width="1920" height="34" fill="url(#task)"/>
<rect x="91" y="1046" width="110" height="34" fill="#eef2f4" opacity=".7"/>
<!-- ghost elements -->
<g opacity=".1">
<rect x="98" y="1047" width="14" height="33" fill="#4a7a98"/><rect x="114" y="1047" width="12" height="33" fill="#8a9aa2"/>
<rect x="214" y="1056" width="22" height="22" fill="#7c8ed0"/>
<rect x="250" y="1048" width="22" height="22" fill="#5a88c8"/>
<path d="M294 1057L288 1063L294 1070M302 1057L296 1063L302 1070M322 1056L318 1063L322 1070" fill="none" stroke="#506070" stroke-width="2"/>
<circle cx="1772" cy="1068" r="14" fill="none" stroke="#777" stroke-width="2"/><path d="M1782 1078L1790 1086" stroke="#777" stroke-width="3"/>
<circle cx="1813" cy="1061" r="10" fill="none" stroke="#777" stroke-width="2"/><circle cx="1853" cy="1061" r="10" fill="none" stroke="#777" stroke-width="2"/>
<path d="M1720 1050L1735 1062L1722 1078" fill="none" stroke="#4a8" stroke-width="6"/>
<path d="M1652 1060C1660 1050 1672 1052 1676 1060" fill="none" stroke="#5a88c8" stroke-width="4"/>
</g>
<text x="137" y="1065" style="fill:#d2dbdf" font-size="17.500" textLength="61" lengthAdjust="spacingAndGlyphs">Analyze</text>
<circle cx="47" cy="1082" r="15" fill="url(#sun)"/>
<text x="76" y="1075" font-size="17" style="fill:#333" textLength="35" lengthAdjust="spacingAndGlyphs">16°C</text>
<!-- start -->
<rect x="642" y="1066" width="17" height="14" fill="#43b9f2"/><rect x="661" y="1066" width="16" height="14" fill="#1d8fe0"/>
<!-- search pill -->
<path d="M699 1080V1079Q699 1059 719 1059H1004Q1024 1059 1024 1079V1080Z" fill="#fbfcfd" stroke="#d2dadd" stroke-width="1.500"/>
<circle cx="725" cy="1079" r="7" fill="none" stroke="#222" stroke-width="2"/>
<text x="753" y="1087" font-size="17" style="fill:#555">Search</text>
<ellipse cx="968" cy="1076" rx="15" ry="8" fill="#8e9c2c"/><ellipse cx="980" cy="1074" rx="8" ry="6" fill="#a3ad36"/>
<path d="M1000 1063H1016V1080H992Z" fill="#bf8f6a"/><path d="M1016 1063L1022 1075L1020 1080H1016Z" fill="#e2c8ae"/>
<!-- task view -->
<rect x="1054" y="1066" width="26" height="14" fill="#f6f6f6"/><rect x="1044" y="1073" width="24" height="7" fill="#444"/><rect x="1056" y="1073" width="14" height="7" fill="#cfcfcf"/>
<!-- tile -->
<rect x="1101" y="1053" width="57" height="27" rx="4" fill="#f2f5f7"/>
<path d="M1115 1068H1135V1080H1130V1073H1120V1080H1115Z" fill="none" stroke="#d83a10" stroke-width="3" stroke-dasharray="4 2"/><rect x="1133" y="1068" width="6" height="12" fill="#aab"/>
<!-- chrome -->
<circle cx="1195" cy="1083" r="19" fill="#e33b2e"/>
<path d="M1176.500 1078A19 19 0 0 0 1178 1092L1190 1080Z" fill="#2da94f"/>
<path d="M1200 1077H1214A19 19 0 0 1 1212 1092Z" fill="#fbc02d"/>
<circle cx="1195" cy="1083" r="9" fill="#fff"/><circle cx="1195" cy="1083" r="6.500" fill="#4286f5"/>
<!-- black app -->
<rect x="1245" y="1065" width="35" height="15" rx="2" fill="#000"/><path d="M1254 1074V1080M1263 1072V1080M1272 1068V1080" stroke="#3a9ad8" stroke-width="2"/>
<!-- tray -->
<text x="1616" y="1077" font-size="16.500" style="fill:#333" textLength="33" lengthAdjust="spacingAndGlyphs">ENG</text>
<path d="M1678 1080V1072H1692V1080M1696 1080V1072H1700V1080" fill="none" stroke="#222" stroke-width="1.500"/>
<path d="M1714 1076H1719L1726 1071V1080" fill="none" stroke="#222" stroke-width="1.500"/><path d="M1730 1074Q1733 1077 1732 1080M1733 1071Q1738 1075 1736 1080" fill="none" stroke="#222" stroke-width="1.300"/>
<path d="M1752 1080L1756 1071H1768V1080" fill="none" stroke="#222" stroke-width="1.500"/><path d="M1753 1072L1759 1071L1755 1076H1760" stroke="#000" stroke-width="1.500" fill="none"/>
<text x="1825" y="1075" font-size="17" style="fill:#333" textLength="65" lengthAdjust="spacingAndGlyphs">9:47 AM</text>
</svg>
</body></html>
